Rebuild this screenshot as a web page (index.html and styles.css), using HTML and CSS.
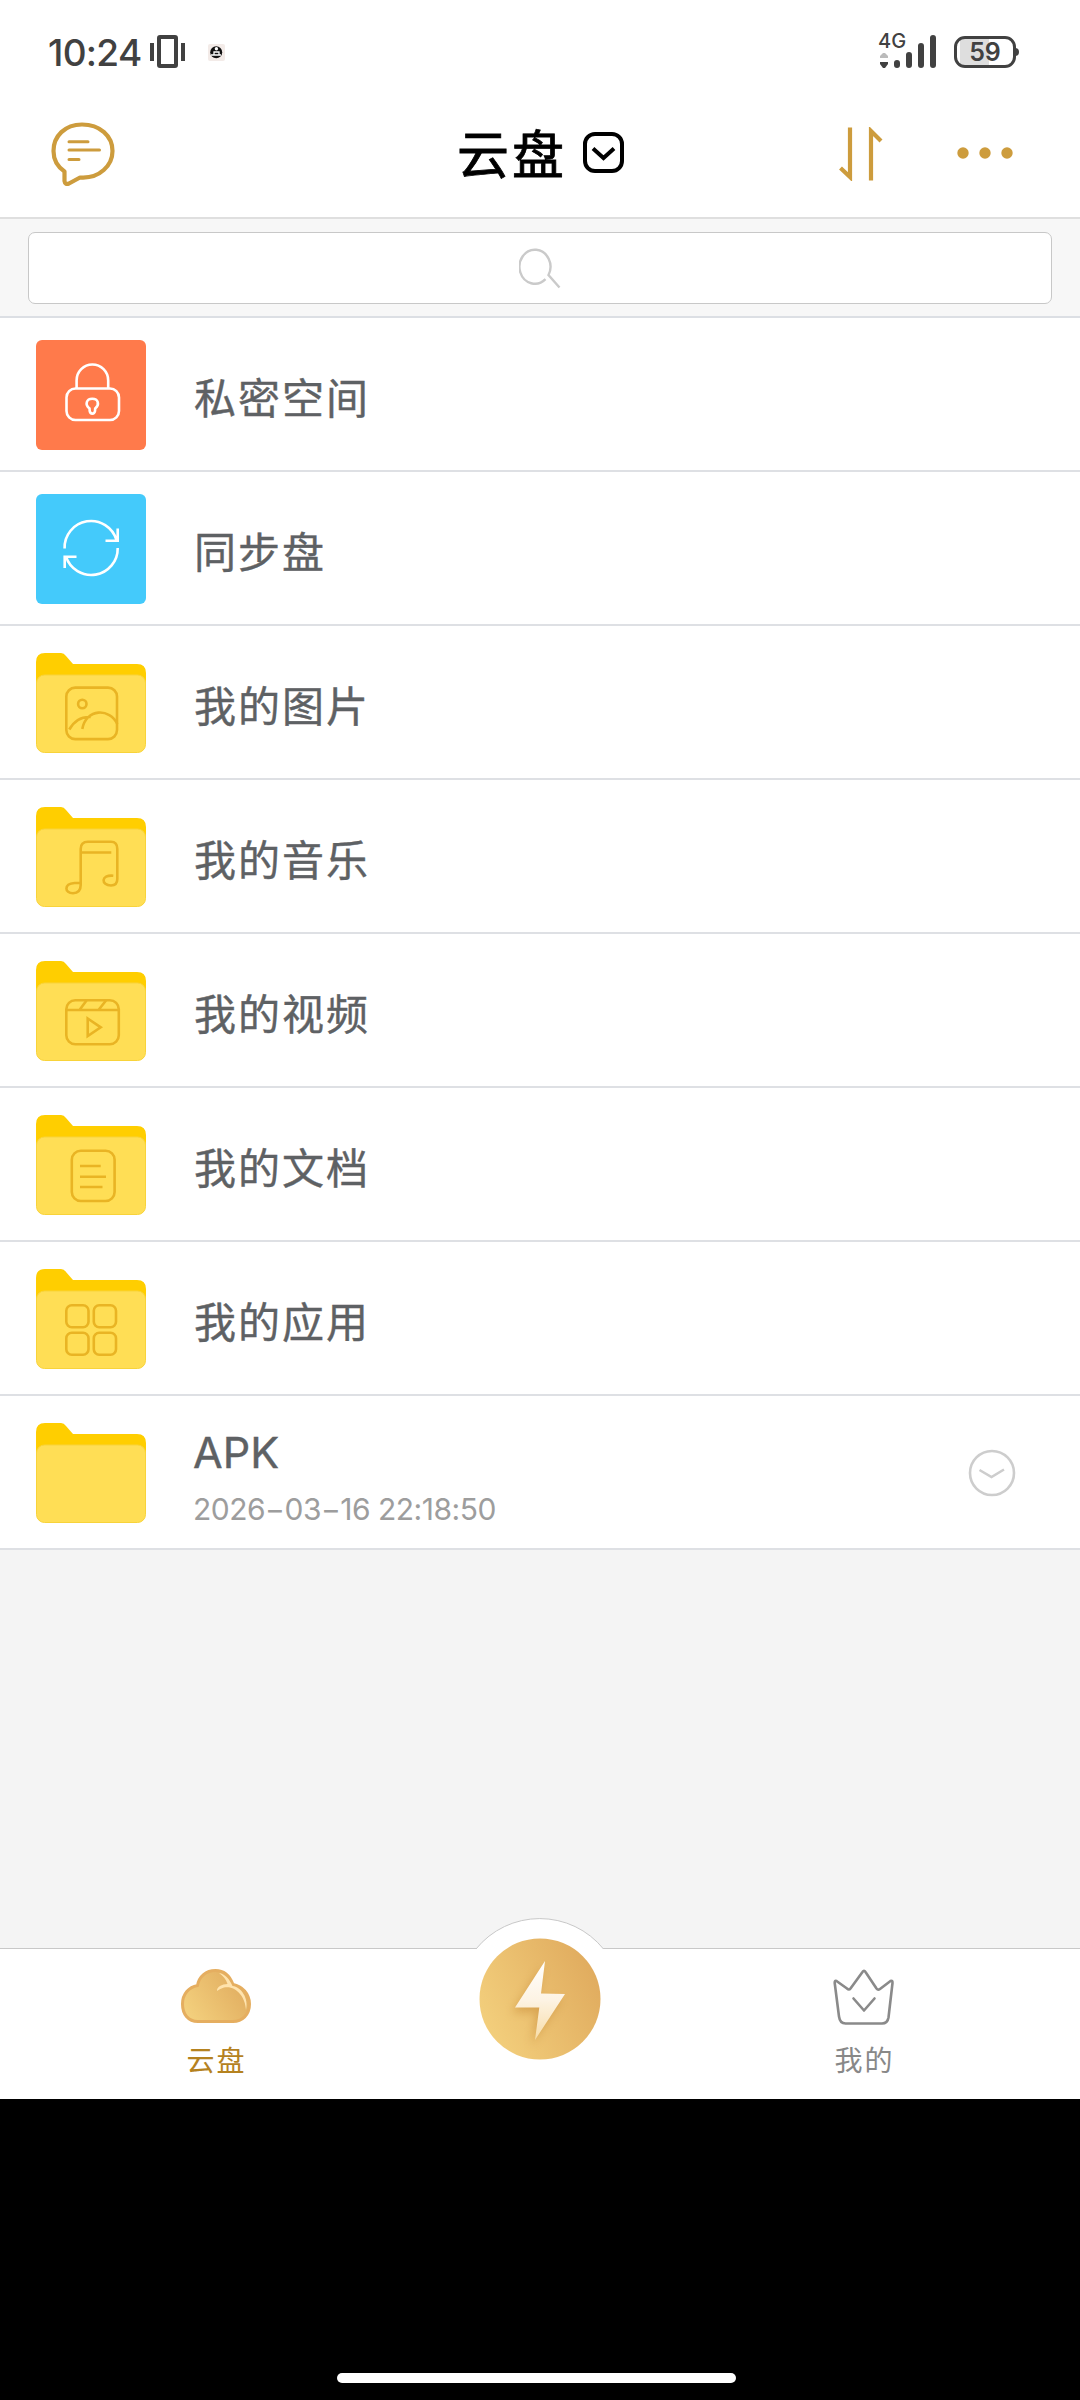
FILE: index.html
```html
<!DOCTYPE html>
<html lang="zh-CN">
<head>
<meta charset="utf-8">
<title>云盘</title>
<link rel="stylesheet" href="styles.css">
</head>
<body>
<svg class="defs" width="0" height="0">
  <defs>
    <symbol id="folder" viewBox="0 0 110 110">
      <path fill="#ffce00" stroke="none" d="M0 14Q0 5 9 5H25Q28 5 30 8L37 16H101Q110 16 110 25V60H0Z"/>
      <rect x=".5" y="27" width="109" height="77.5" rx="8" fill="#ffde55" stroke="#f8d33a" stroke-width="1"/>
    </symbol>
    <linearGradient id="gold" x1="0" y1=".8" x2="1" y2=".3"><stop offset="0" stop-color="#f4d17e"/><stop offset="1" stop-color="#e0ab5e"/></linearGradient>
    <linearGradient id="bolt" x1="0" y1="0" x2="0" y2="1"><stop offset="0" stop-color="#fff"/><stop offset=".5" stop-color="#fdf3e3"/><stop offset="1" stop-color="#f7dca6"/></linearGradient>
  </defs>
</svg>
<div class="screen">
  <div class="status">
    <span class="clock">10:24</span>
    <svg class="vibrate" width="36" height="34" viewBox="0 0 36 34"><path fill="#414141" d="M0 8h4v18H0zM31 8h4v18h-4z"/><rect x="9" y="2" width="17" height="29" rx="1" fill="none" stroke="#414141" stroke-width="4"/></svg>
    <svg class="badge" width="17" height="17" viewBox="0 0 17 17"><rect width="17" height="17" rx="2" fill="#f3ebe8"/><circle cx="8.2" cy="8.2" r="6" fill="#111"/><circle cx="8.4" cy="4.8" r="1.7" fill="#fff"/><path d="M6 11V8h5v3M3 11h10" stroke="#fff" stroke-width="1.3" fill="none"/></svg>
    <div class="network">
      <span class="gen">4G</span>
      <svg width="60" height="36" viewBox="0 0 60 36"><path fill="#bbb" d="M2 26V24L5 21H7L10 24V26Z"/><path fill="#414141" d="M2 30V32L5 36H7L10 32V30Z"/><path stroke="#414141" stroke-width="6" stroke-linecap="round" d="M19 31v2M31 23v10M43 14v19M55 6v27"/></svg>
    </div>
    <div class="battery"><span>59</span></div>
  </div>

  <header class="header">
    <svg class="chat" width="66" height="66" viewBox="0 0 66 66" fill="none" stroke="#cd9c3d" stroke-width="4.2" stroke-linejoin="round" stroke-linecap="round"><path d="M31 2.5C14 2.5 2.5 14 2.5 29C2.5 38 7 45 13.5 49.5V59Q14 63 18 61.5L29 55.5C49 57 61.500 43 61.500 29C61.500 14 49 2.500 31 2.500Z"/><path stroke-width="3" d="M18 19.700H37M18 28H48.500M18 37.500H28"/></svg>
    <div class="title"><h1>云盘</h1><svg width="42" height="42" viewBox="0 0 42 42" fill="none" stroke="#000" stroke-width="4"><rect x="2" y="2" width="37" height="37" rx="10"/><path d="M10 16.500L20.500 26L31 16.500"/></svg></div>
    <svg class="sort" width="44" height="54" viewBox="0 0 44 54" fill="none" stroke="#cd9c3d" stroke-width="4.200"><path d="M11 .5V50L1.500 41M32 53.500V4L42 14"/></svg>
    <svg class="more" width="58" height="14" viewBox="0 0 58 14" fill="#cd9c3d"><circle cx="7" cy="7" r="5.700"/><circle cx="29" cy="7" r="5.700"/><circle cx="51" cy="7" r="5.700"/></svg>
  </header>

  <div class="searchbar"><div class="searchbox"><svg width="42" height="44" viewBox="0 0 42 44" fill="none" stroke="#cacaca" stroke-width="2.400"><path d="M26.500 33.200A15.500 17 0 1 1 29.500 29L40.500 41.500"/></svg></div></div>

  <main class="list">
    <div class="row"><div class="tile lock"><svg width="110" height="110" viewBox="0 0 110 110" fill="none" stroke="#fff" stroke-width="2.600"><rect x="30.500" y="48.500" width="52.500" height="31.500" rx="9"/><path d="M40.600 48V40.500A15.800 16 0 0 1 72.200 40.500V48M53.500 68.500C48.500 64.500 50.500 58.800 56.300 58.800S64 64.500 59.200 68.500L59 71Q58.500 73.600 56.300 73.600T53.700 71Z"/></svg></div><span class="name">私密空间</span></div>
    <div class="row"><div class="tile sync"><svg width="110" height="110" viewBox="0 0 110 110" fill="none" stroke="#fff" stroke-width="2.600"><path d="M28.600 54.500A26.500 26.500 0 0 1 80.500 46M81.700 34.500V46.700H69.500M81.700 54A26.500 26.500 0 0 1 30 62.700M40.500 62.700H28.700V74"/></svg></div><span class="name">同步盘</span></div>
    <div class="row"><svg class="tile glyph" viewBox="0 0 110 110"><use href="#folder"/><rect x="30.300" y="39.600" width="50.700" height="51.500" rx="9"/><circle cx="46.300" cy="56" r="4.200"/><path d="M33.300 81.500C38 73 45 68.500 54.700 69M46.300 81C50 60 74 60 81.300 76"/></svg><span class="name">我的图片</span></div>
    <div class="row"><svg class="tile glyph" viewBox="0 0 110 110"><use href="#folder"/><path d="M44.700 81H38.500C27.500 82 28.500 91.200 37 91.200Q44.700 91 44.700 83V47Q44.700 39.800 52 39.800H75Q81.300 39.800 81.300 47V77Q81.300 83.500 75 83.500C65 83.500 64.500 72.500 77.300 73.700M44.700 50.500H75.300"/></svg><span class="name">我的音乐</span></div>
    <div class="row"><svg class="tile glyph" viewBox="0 0 110 110"><use href="#folder"/><rect x="30.300" y="44.200" width="52.500" height="44" rx="9"/><path d="M30.300 54H83M50.500 44.500L43.500 54M70 44.500L62.500 54M51.700 62.500L64.700 71.300L51.700 80Z"/></svg><span class="name">我的视频</span></div>
    <div class="row"><svg class="tile glyph" viewBox="0 0 110 110"><use href="#folder"/><rect x="35.800" y="40.800" width="42.800" height="50.200" rx="9"/><path d="M44 56H64.700M44 66.700H70M44 77H66.500"/></svg><span class="name">我的文档</span></div>
    <div class="row"><svg class="tile glyph" viewBox="0 0 110 110"><use href="#folder"/><rect x="30.300" y="41.200" width="22.200" height="22" rx="5.500"/><rect x="57.800" y="41.200" width="22.200" height="22" rx="5.500"/><rect x="30.300" y="68.800" width="22.200" height="22" rx="5.500"/><rect x="57.800" y="68.800" width="22.200" height="22" rx="5.500"/></svg><span class="name">我的应用</span></div>
    <div class="row"><svg class="tile glyph" viewBox="0 0 110 110"><use href="#folder"/></svg>
      <div class="info"><span class="file">APK</span><span class="date">2026−03−16 22:18:50</span></div>
      <svg class="expand" width="48" height="48" viewBox="0 0 48 48" fill="none" stroke="#cdcdcd" stroke-width="2.600"><circle cx="24" cy="24" r="22"/><path d="M11.500 21L23.500 28L36 20.500"/></svg></div>
  </main>

  <nav class="tabs">
    <svg class="hump" width="128" height="32" viewBox="0 0 128 32"><path d="M0 31A82 82 0 0 1 127.500 31V32H0Z" fill="#fff"/><path d="M0 31A82 82 0 0 1 127.500 31" fill="none" stroke="#c8c8c8"/></svg>
    <div class="tab active"><svg width="72" height="58" viewBox="0 0 72 58"><path d="M18 53.500C8 53.500 2.500 46 2.500 36C2.500 26 9 19 17.500 17.500C19 8.500 26 2.500 35.500 2.500C44 2.500 50 8.500 53 16.500C62 18 69.500 26 69.500 36C69.500 47 62 53.500 53 53.500Z" fill="url(#gold)" stroke="#e5ae60" stroke-width="3"/><path d="M39 5C45 6 49.500 11 52.500 18C61 19 69 30 66 42C65.500 28 55 17 44 19.500Q40 20.500 37 23C36.500 19 42 16 47.500 16C46 11 43 8 39 5Z" fill="#ffe3ad"/></svg><span>云盘</span></div>
    <div class="fab"><svg width="122" height="122" viewBox="0 0 122 122"><circle cx="61" cy="61" r="60.500" fill="url(#gold)"/><path class="flash" d="M66 23L62 55.500L86 56L56 102L60.300 69.500H36Z" fill="url(#bolt)"/></svg></div>
    <div class="tab"><svg width="62" height="58" viewBox="0 0 62 58" fill="none" stroke="#8a8a8a" stroke-width="2.600" stroke-linejoin="round" stroke-linecap="round"><path d="M3.500 13Q1.500 12 1.700 15L6 48.500Q7 55.500 12.500 55.500H49Q54.500 55.500 55.500 49.500L59.500 15Q59.700 12 57.500 13L47 21Q45 22.500 43.500 20.500L32.500 4Q31 1.500 29.500 4L17.500 20.500Q16 22.500 14 20.500Z"/><path d="M20.500 30.500L31 42.500L41.500 30.500"/></svg><span>我的</span></div>
  </nav>
  <footer class="gesture"><div class="pill"></div></footer>
</div>
</body>
</html>
```
FILE: styles.css
```css
* { box-sizing: border-box; }
body { margin: 0; background: #f4f4f4; font-family: Inter, "Noto Sans CJK SC", sans-serif; }
svg { display: block; flex: none; }
.defs { position: absolute; }
.screen { width: 1080px; height: 2400px; display: flex; flex-direction: column; overflow: hidden; }

.status { height: 90px; background: #fff; display: flex; align-items: flex-start; padding: 0 61px 0 48px; color: #414141; }
.clock { width: 102px; padding-top: 30px; font-size: 37px; line-height: 45px; font-weight: 500; letter-spacing: -0.7px; white-space: nowrap; }
.vibrate { margin-top: 35px; }
.badge { margin: 44px 0 0 22px; }
.network { margin: 32px 16px 0 auto; width: 60px; height: 38px; display: grid; }
.network > * { grid-area: 1 / 1; }
.gen { font-size: 20px; line-height: 18px; font-weight: 500; }
.battery { position: relative; margin-top: 36px; width: 62px; height: 32px; border: 3px solid #414141; border-radius: 11px; display: flex; align-items: center; justify-content: center; background: linear-gradient(90deg, #fff 3px, #dedede 3px, #dedede 32px, #fff 32px); font-size: 25px; font-weight: 600; margin-right: 3px; }
.battery::after { content: ""; position: absolute; right: -6px; top: 9px; width: 4px; height: 8px; border-radius: 0 4px 4px 0; background: #414141; }

.header { height: 129px; background: #fff; border-bottom: 2px solid #dfdfdf; display: flex; align-items: flex-start; padding: 0 66px 0 51px; }
.chat { margin-top: 32px; }
.title { margin: 28px 0 0 340px; display: flex; }
.title h1 { margin: 0; width: 126px; font-size: 52px; line-height: 76px; font-weight: 400; -webkit-text-stroke: 0.8px #000; letter-spacing: 3px; color: #000; }
.title svg { margin-top: 14px; }
.sort { margin: 37px 0 0 214px; }
.more { margin: 56px 0 0 auto; }

.searchbar { height: 99px; background: #f7f7f7; border-bottom: 2px solid #dcdfe4; padding: 13px 28px; }
.searchbox { height: 72px; border: 1px solid #c8c8c8; border-radius: 7px; background: #fff; display: flex; justify-content: center; padding-top: 13px; }

.list { flex: 1; background: #f4f4f4; }
.row { height: 154px; background: #fff; border-bottom: 2px solid #dee0e4; display: flex; align-items: center; padding: 0 64px 0 36px; }
.tile { width: 110px; height: 110px; border-radius: 6px; flex: none; margin-top: 2px; }
.lock { background: #ff7a4b; }
.sync { background: #44cafb; }
.glyph { fill: none; stroke: #e9b424; stroke-width: 2.6px; }
.name { margin-left: 48px; padding-top: 10px; font-size: 42px; line-height: 60px; letter-spacing: 2px; color: #5e6164; -webkit-text-stroke: 0.4px #5e6164; }
.info { margin-left: 47px; padding-top: 8px; display: flex; flex-direction: column; }
.file { font-size: 43px; line-height: 54px; color: #5e6164; -webkit-text-stroke: 0.4px #5e6164; }
.date { margin-top: 11px; font-size: 30px; line-height: 38px; letter-spacing: -0.5px; color: #9d9d9d; white-space: nowrap; }
.expand { margin: 1px 0 0 auto; }

.tabs { position: relative; height: 151px; background: #fff; border-top: 1px solid #c8c8c8; display: grid; grid-template-columns: repeat(3, 324px); padding: 0 54px; }
.hump { position: absolute; left: 476px; top: -31px; }
.tab { display: flex; flex-direction: column; align-items: center; padding-top: 19px; color: #888; font-size: 28px; line-height: 40px; letter-spacing: 2px; }
.tab span { margin-top: 15px; padding-left: 1px; }
.active { color: #b5821f; }
.fab { position: relative; display: flex; justify-content: center; margin: -11px 1px 0 0; }
.flash { filter: drop-shadow(-3px 5px 4px rgba(190, 125, 40, .4)); }

.gesture { height: 301px; background: #000; display: flex; align-items: flex-end; padding: 0 0 17px 337px; }
.pill { width: 399px; height: 10px; border-radius: 5px; background: #fff; }
```
